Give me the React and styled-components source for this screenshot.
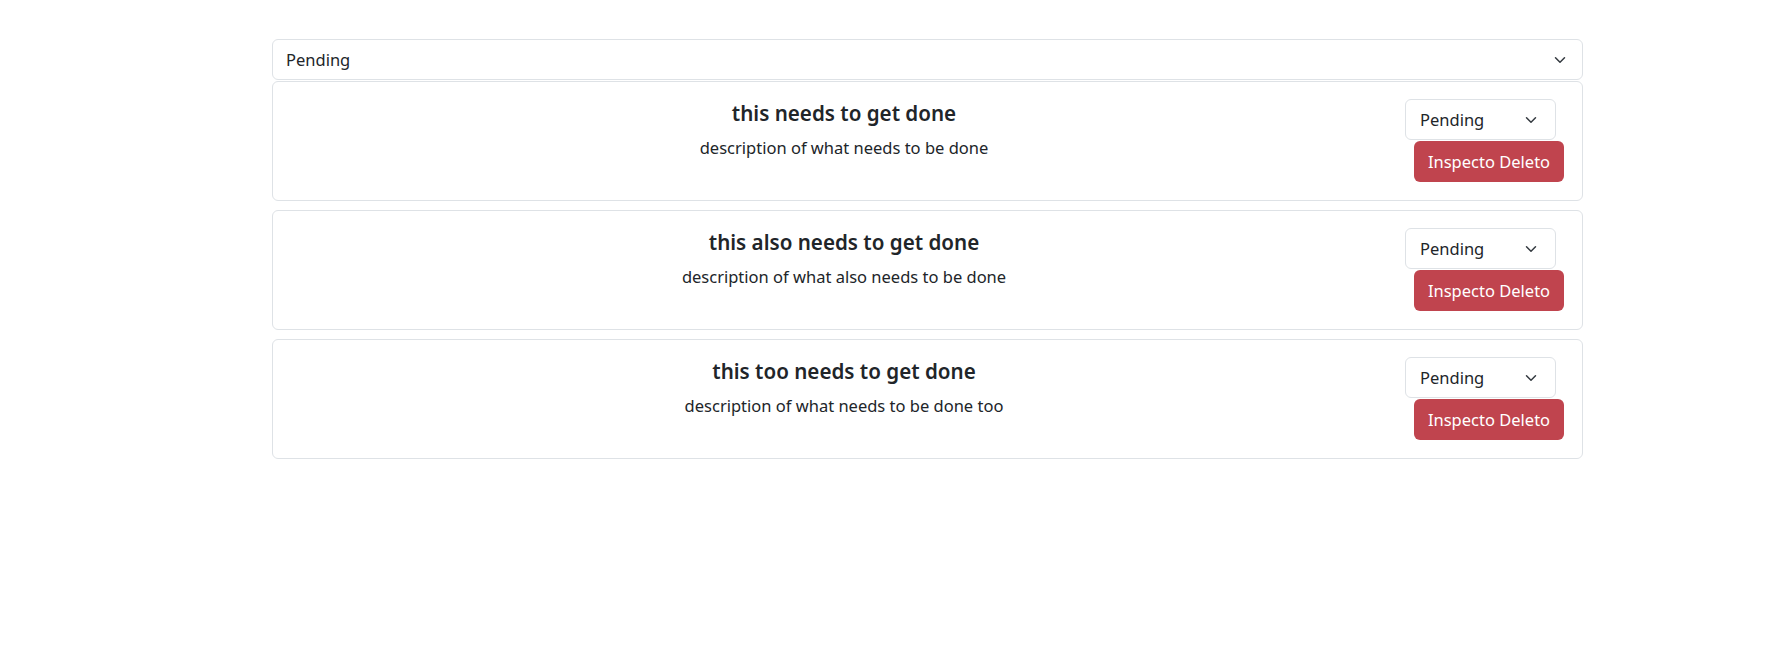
import React from "react";
import styled, { createGlobalStyle } from "styled-components";

const GlobalStyle = createGlobalStyle`
  html, body { margin: 0; padding: 0; background: #fff; }
  body {
    font-family: "Noto Sans", "Open Sans", "Liberation Sans", Arial, sans-serif;
    color: #212529;
    font-size: 16.5px;
  }
`;

const Page = styled.div`
  display: flex;
  flex-direction: column;
  width: 1311px;
  margin-left: 272px;
  padding-top: 39px;
`;

const SelectWrap = styled.div`
  position: relative;
  width: ${(p) => p.$width || "100%"};
  height: ${(p) => p.$height || 41}px;
  align-self: flex-start;
  flex: none;
`;

const Select = styled.select`
  appearance: none;
  -webkit-appearance: none;
  box-sizing: border-box;
  width: 100%;
  height: 100%;
  border: 1px solid #dee2e6;
  border-radius: 6px;
  background: #fff;
  color: #212529;
  font-family: inherit;
  font-size: 16.5px;
  padding: 0 36px 0 ${(p) => p.$padLeft || 13}px;
  outline: none;
`;

const Chevron = styled.svg`
  position: absolute;
  right: ${(p) => p.$right}px;
  top: 50%;
  width: 12px;
  height: 12px;
  margin-top: -6px;
  pointer-events: none;
`;

const CardList = styled.div`
  display: flex;
  flex-direction: column;
  gap: 9px;
  margin-top: 1px;
`;

const Card = styled.div`
  box-sizing: border-box;
  height: 120px;
  border: 1px solid #dee2e6;
  border-radius: 6px;
  display: flex;
  background: #fff;
`;

const Content = styled.div`
  flex: 1;
  text-align: center;
  padding: 19px 6px 0 16px;
`;

const Title = styled.h5`
  margin: 0 0 11px;
  font-size: 20.6px;
  font-weight: 600;
  line-height: 24px;
`;

const Description = styled.p`
  margin: 0;
  font-size: 16.5px;
  line-height: 24px;
`;

const Actions = styled.div`
  width: 159px;
  padding: 17px 18px 0 0;
  display: flex;
  flex-direction: column;
`;

const DangerButton = styled.button`
  align-self: flex-end;
  box-sizing: border-box;
  width: 150px;
  height: 41px;
  margin-top: 1px;
  border: none;
  border-radius: 6px;
  background: #c0444e;
  color: #fff;
  font-family: inherit;
  font-size: 16.5px;
  padding: 0;
  cursor: pointer;
`;

const ChevronIcon = ({ right }) => (
  <Chevron $right={right} viewBox="0 0 16 16" fill="none">
    <path d="m2 5 6 6 6-6" stroke="#343a40" strokeWidth="2" strokeLinecap="round" strokeLinejoin="round" />
  </Chevron>
);

const StatusSelect = ({ width, padLeft, chevronRight }) => (
  <SelectWrap $width={width}>
    <Select $padLeft={padLeft} defaultValue="pending">
      <option value="pending">Pending</option>
      <option value="done">Done</option>
    </Select>
    <ChevronIcon right={chevronRight} />
  </SelectWrap>
);

const tasks = [
  { title: "this needs to get done", description: "description of what needs to be done" },
  { title: "this also needs to get done", description: "description of what also needs to be done" },
  { title: "this too needs to get done", description: "description of what needs to be done too" },
];

export default function App() {
  return (
    <>
      <GlobalStyle />
      <Page>
        <StatusSelect width="100%" padLeft={13} chevronRight={17} />
        <CardList>
          {tasks.map((t) => (
            <Card key={t.title}>
              <Content>
                <Title>{t.title}</Title>
                <Description>{t.description}</Description>
              </Content>
              <Actions>
                <StatusSelect width="151px" padLeft={14} chevronRight={19} />
                <DangerButton>Inspecto Deleto</DangerButton>
              </Actions>
            </Card>
          ))}
        </CardList>
      </Page>
    </>
  );
}
